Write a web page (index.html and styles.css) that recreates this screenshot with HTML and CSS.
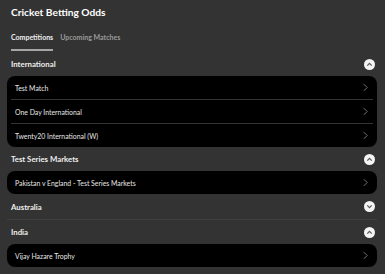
FILE: index.html
```html
<!DOCTYPE html>
<html lang="en">
<head>
  <meta charset="UTF-8">
  <meta name="viewport" content="width=device-width, initial-scale=1">
  <title>Cricket Betting Odds</title>
  <link rel="stylesheet" href="styles.css">
</head>
<body>
  <h1 class="title">Cricket Betting Odds</h1>
  <div class="tabs">
    <span class="tab active">Competitions</span>
    <span class="tab">Upcoming Matches</span>
  </div>

  <div class="section">
    <div class="sec-head"><span>International</span><span class="toggle up"><svg viewBox="0 0 10 10"><path d="M3 6 L5 4 L7 6"/></svg></span></div>
    <div class="card">
      <div class="row"><span>Test Match</span><svg class="arrow" viewBox="0 0 6 10"><path d="M1 1 L5 5 L1 9"/></svg></div>
      <div class="row"><span>One Day International</span><svg class="arrow" viewBox="0 0 6 10"><path d="M1 1 L5 5 L1 9"/></svg></div>
      <div class="row"><span>Twenty20 International (W)</span><svg class="arrow" viewBox="0 0 6 10"><path d="M1 1 L5 5 L1 9"/></svg></div>
    </div>
  </div>

  <div class="section">
    <div class="sec-head"><span>Test Series Markets</span><span class="toggle up"><svg viewBox="0 0 10 10"><path d="M3 6 L5 4 L7 6"/></svg></span></div>
    <div class="card">
      <div class="row"><span>Pakistan v England - Test Series Markets</span><svg class="arrow" viewBox="0 0 6 10"><path d="M1 1 L5 5 L1 9"/></svg></div>
    </div>
  </div>

  <div class="section closed">
    <div class="sec-head"><span>Australia</span><span class="toggle"><svg viewBox="0 0 10 10"><path d="M3 4 L5 6 L7 4"/></svg></span></div>
  </div>

  <div class="section">
    <div class="sec-head"><span>India</span><span class="toggle up"><svg viewBox="0 0 10 10"><path d="M3 6 L5 4 L7 6"/></svg></span></div>
    <div class="card">
      <div class="row"><span>Vijay Hazare Trophy</span><svg class="arrow" viewBox="0 0 6 10"><path d="M1 1 L5 5 L1 9"/></svg></div>
    </div>
  </div>
</body>
</html>
```

FILE: styles.css
```css
body { margin: 0; padding: 0 8px 0 7px; background: #333333; font-family: Lato, "Open Sans", sans-serif; color: #eeeeee; }
.title { margin: 0; padding: 5px 4px 0; height: 19px; font-size: 10.2px; font-weight: bold; color: #ffffff; line-height: 15px; }
.tabs { display: flex; gap: 7px; padding: 0 4px; margin-top: 3px; height: 25px; }
.tab { font-size: 7px; font-weight: bold; color: #9a9a9a; line-height: 17px; padding-top: 2px; }
.tab.active { color: #eeeeee; border-bottom: 2px solid #a6a6a6; height: 24px; box-sizing: border-box; }
.sec-head { display: flex; justify-content: space-between; align-items: center; height: 24px; padding: 0 4px; font-size: 7.8px; font-weight: bold; }
.section.closed { border-bottom: 1px solid #3f3f3f; }
.section.closed .sec-head { height: 25px; }
.toggle { width: 11px; height: 11px; border-radius: 50%; background: #f4f4f4; display: flex; margin-right: -2px; }
.toggle svg { width: 11px; height: 11px; fill: none; stroke: #555; stroke-width: 1.1; }
.card { background: #000000; border-radius: 8px; }
.row { display: flex; justify-content: space-between; align-items: center; height: 23px; margin: 0 4px; padding: 0 4px; border-top: 1px solid #333333; font-size: 6.9px; color: #e6e6e6; }
.row:first-child { border-top: none; }
.arrow { width: 5px; height: 9px; fill: none; stroke: #8a8a8a; stroke-width: 1; margin-right: 1px; }
```
